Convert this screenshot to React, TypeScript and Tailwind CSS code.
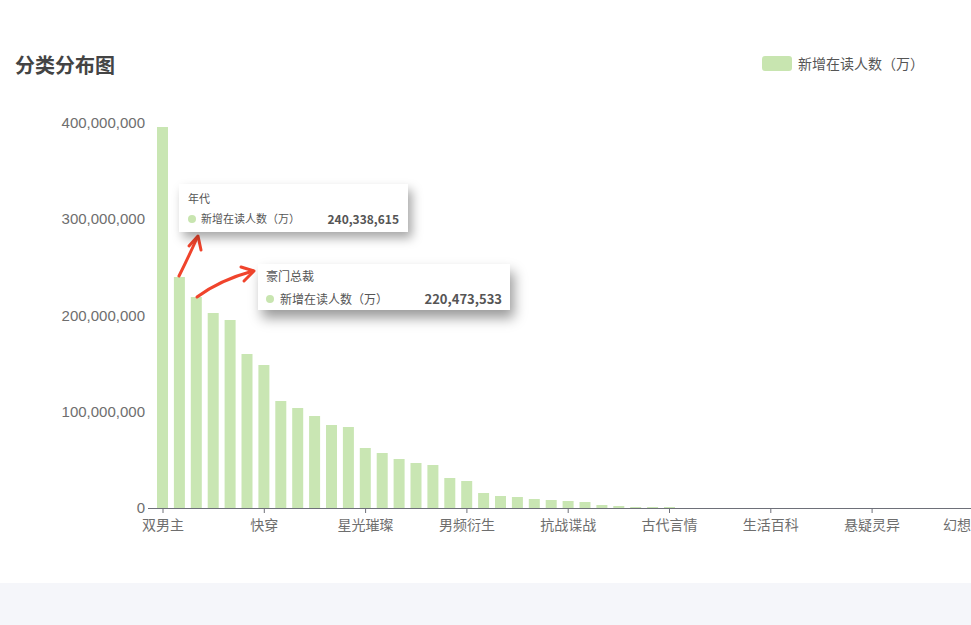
import React from "react";

const tops = [127,277,297,313,320,354,365,401,408,416,425,427,448,453,459,463,465,478,481,493,496,497,499,500,501,502,505,506,507,507,507,508,508,508];
const labels = ["双男主","快穿","星光璀璨","男频衍生","抗战谍战","古代言情","生活百科","悬疑灵异","幻想"];

export default function App() {
  const font = { fontFamily: '"Noto Sans CJK SC", "Liberation Sans", sans-serif' };
  return (
    <div className="relative w-[971px] h-[625px] bg-white overflow-hidden" style={font}>
      <div className="h-[583px] relative">
        <div className="absolute left-[15px] top-[50px] text-[20px] font-bold text-[#444]">分类分布图</div>
        <div className="absolute left-[762px] top-[53px] flex items-center gap-[6px] text-[14px] text-[#555]">
          <span className="w-[30px] h-[15px] rounded-[3px] bg-[#c8e5b0]" />
          新增在读人数（万）
        </div>
        <svg width="971" height="583" className="absolute left-0 top-0">
          {[0,1,2,3,4].map(i => (
            <text key={i} x={145} y={508 - i*96.25 + 5} textAnchor="end" fontSize="15" fill="#6e6e6e" fontFamily='"Liberation Sans", sans-serif'>
              {i === 0 ? "0" : `${i*100},000,000`}
            </text>
          ))}
          {tops.map((t, i) => (
            <rect key={i} x={157 + i*16.9} y={t} width={11} height={Math.max(508 - t, 0.5)} fill="#c9e6b3" />
          ))}
          <line x1={148} y1={508.5} x2={971} y2={508.5} stroke="#6e7079" />
          {labels.map((l, i) => (
            <g key={i}>
              <line x1={163 + i*101.3} y1={508} x2={163 + i*101.3} y2={513} stroke="#6e7079" />
              <text x={i === 8 ? 943 : 163 + i*101.3} y={530} textAnchor={i === 8 ? "start" : "middle"} fontSize="14" fill="#6e6e6e">{l}</text>
            </g>
          ))}
          <g stroke="#f0442c" strokeWidth="3" fill="none" strokeLinecap="round" strokeLinejoin="round">
            <path d="M179 276 Q188 258 197 238" />
            <path d="M189 246 L198 236 L201 250" />
            <path d="M197 297 Q220 280 253 271" />
            <path d="M241 267 L254 271 L244 281" />
          </g>
        </svg>
        <div className="absolute left-[179px] top-[184px] w-[229px] h-[48px] bg-white shadow-[4px_6px_10px_rgba(0,0,0,0.35)] px-[9px] pt-[6px] text-[11px] text-[#555]">
          <div>年代</div>
          <div className="flex items-center mt-[3px]">
            <span className="w-[8px] h-[8px] rounded-full bg-[#c8e5b0] mr-[5px]" />
            <span>新增在读人数（万）</span>
            <span className="ml-auto font-bold text-[#555] text-[12px]">240,338,615</span>
          </div>
        </div>
        <div className="absolute left-[258px] top-[264px] w-[252px] h-[46px] bg-white shadow-[4px_8px_12px_rgba(0,0,0,0.4)] px-[8px] pt-[3px] text-[12px] text-[#555]">
          <div>豪门总裁</div>
          <div className="flex items-center mt-[4px]">
            <span className="w-[8px] h-[8px] rounded-full bg-[#c8e5b0] mr-[6px]" />
            <span>新增在读人数（万）</span>
            <span className="ml-auto font-bold text-[13px]">220,473,533</span>
          </div>
        </div>
      </div>
      <div className="h-[42px] bg-[#f5f6fa]" />
    </div>
  );
}
